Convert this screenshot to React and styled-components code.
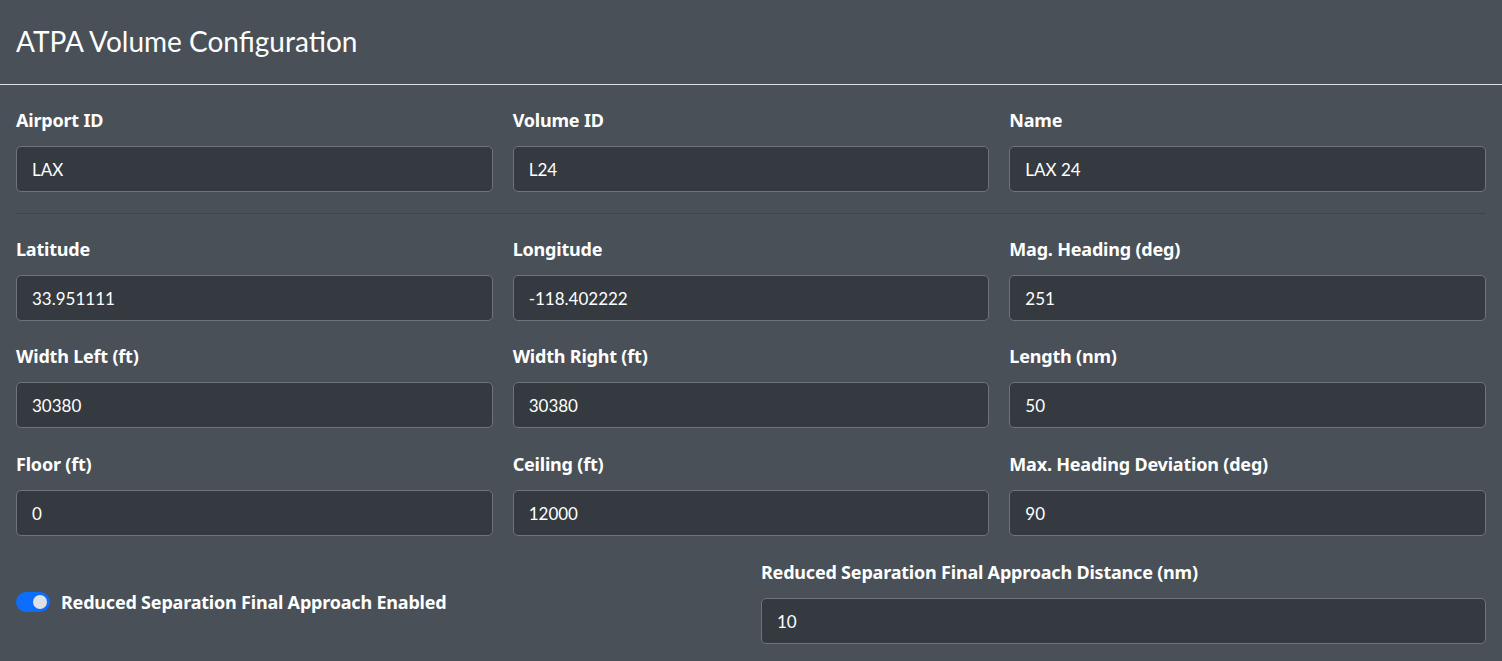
import styled, { createGlobalStyle } from "styled-components";

const GlobalStyle = createGlobalStyle`
    html, body {
        margin: 0;
        padding: 0;
        background: #495057;
    }
    body {
        font-family: Lato, "Noto Sans", sans-serif;
        color: #ffffff;
    }
`;

const Page = styled.div`
    background: #495057;
    min-height: 661px;
`;

const Header = styled.div`
    height: 85px;
    display: flex;
    align-items: center;
    padding: 0 16px;
    border-bottom: 1px solid #dee2e6;
    box-sizing: border-box;
`;

const Title = styled.h4`
    margin: 0;
    font-size: 28px;
    font-weight: 400;
    padding-bottom: 3px;
`;

const Body = styled.div`
    padding: 22px 16px 0;
`;

const Row = styled.div`
    display: grid;
    grid-template-columns: ${(p) => `repeat(${p.cols}, 1fr)`};
    column-gap: 20px;
    margin-bottom: ${(p) => p.gap || 23}px;
`;

const Field = styled.div`
    display: flex;
    flex-direction: column;
`;

const Label = styled.label`
    font-family: "Noto Sans", Lato, sans-serif;
    font-size: 18px;
    font-weight: 700;
    line-height: 26px;
    margin-bottom: 13px;
    letter-spacing: -0.2px;
`;

const Input = styled.input`
    box-sizing: border-box;
    height: 46px;
    width: 100%;
    padding: 0 15px;
    background: #343a40;
    border: 1px solid #6c757d;
    border-radius: 5px;
    color: #ffffff;
    font-family: Lato, "Noto Sans", sans-serif;
    font-size: 17px;
    outline: none;
`;

const Divider = styled.hr`
    margin: 0 0 22px;
    border: none;
    border-top: 1px solid #3f454b;
`;

const SwitchField = styled.div`
    display: flex;
    align-items: center;
    align-self: center;
    gap: 11px;
`;

const Switch = styled.span`
    width: 34px;
    height: 20px;
    border-radius: 10px;
    background: #0d6efd;
    display: flex;
    align-items: center;
    justify-content: ${(p) => (p.$on ? "flex-end" : "flex-start")};
    padding: 0 3px;
    box-sizing: border-box;

    &::after {
        content: "";
        width: 14px;
        height: 14px;
        border-radius: 50%;
        background: #dee2e6;
    }
`;

const SwitchLabel = styled.span`
    font-family: "Noto Sans", Lato, sans-serif;
    font-size: 18px;
    font-weight: 700;
    letter-spacing: -0.2px;
`;

const idFields = [
    { label: "Airport ID", value: "LAX" },
    { label: "Volume ID", value: "L24" },
    { label: "Name", value: "LAX 24" },
];

const geometryRows = [
    [
        { label: "Latitude", value: "33.951111" },
        { label: "Longitude", value: "-118.402222" },
        { label: "Mag. Heading (deg)", value: "251" },
    ],
    [
        { label: "Width Left (ft)", value: "30380" },
        { label: "Width Right (ft)", value: "30380" },
        { label: "Length (nm)", value: "50" },
    ],
    [
        { label: "Floor (ft)", value: "0" },
        { label: "Ceiling (ft)", value: "12000" },
        { label: "Max. Heading Deviation (deg)", value: "90" },
    ],
];

function FormField({ label, value }) {
    return (
        <Field>
            <Label>{label}</Label>
            <Input defaultValue={value} />
        </Field>
    );
}

export default function App() {
    return (
        <Page>
            <GlobalStyle />
            <Header>
                <Title>ATPA Volume Configuration</Title>
            </Header>
            <Body>
                <Row cols={3} gap={21}>
                    {idFields.map((f) => (
                        <FormField key={f.label} {...f} />
                    ))}
                </Row>
                <Divider />
                {geometryRows.map((row, i) => (
                    <Row cols={3} key={i} gap={i === 0 ? 22 : 23}>
                        {row.map((f) => (
                            <FormField key={f.label} {...f} />
                        ))}
                    </Row>
                ))}
                <Row cols={2}>
                    <SwitchField>
                        <Switch $on />
                        <SwitchLabel>Reduced Separation Final Approach Enabled</SwitchLabel>
                    </SwitchField>
                    <FormField label="Reduced Separation Final Approach Distance (nm)" value="10" />
                </Row>
            </Body>
        </Page>
    );
}
